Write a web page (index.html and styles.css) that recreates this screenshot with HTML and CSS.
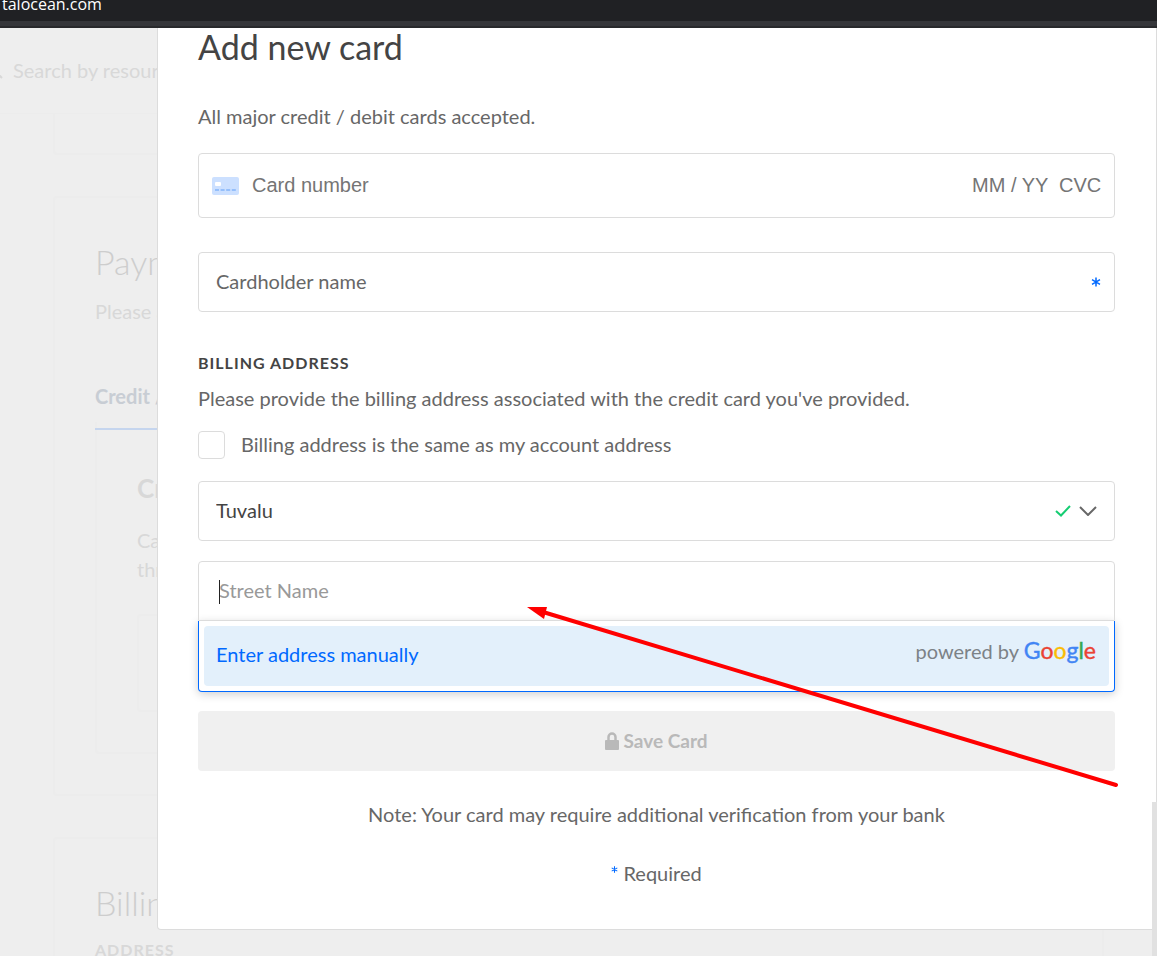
FILE: index.html
```html
<!DOCTYPE html>
<html lang="en">

<head>
    <meta charset="utf-8">
    <meta name="viewport" content="width=device-width, initial-scale=1.0">
    <title>Billing - Add new card</title>
    <link rel="stylesheet" href="styles.css">
</head>

<body>

    <header class="browser">
        <div class="address">talocean.com</div>
    </header>

    <div class="stage">

        <!-- faded billing page behind the modal -->
        <main class="page">
            <div class="search">
                <svg class="search-icon" viewBox="0 0 18 18"><path d="M11 11l6 6" /><circle cx="7" cy="7" r="6" /></svg>
                <span>Search by resource name</span>
            </div>
            <section class="card card-top"></section>
            <section class="card card-payment">
                <h1>Payment methods</h1>
                <p class="lead">Please add a card</p>
                <div class="tab">Credit / Debit Card</div>
                <div class="panel">
                    <h2>Credit Cards</h2>
                    <p>Cards will be charged<br>through the month</p>
                    <div class="add-box"><span>+</span></div>
                </div>
            </section>
            <section class="card card-billing">
                <h1>Billing address</h1>
                <h4>ADDRESS</h4>
            </section>
        </main>

        <form class="modal">
            <h2>Add new card</h2>
            <p class="accepted">All major credit / debit cards accepted.</p>

            <div class="box card-number">
                <svg class="card-icon" viewBox="0 0 27 18">
                    <rect width="27" height="18" rx="2" fill="#cce0ff" />
                    <rect x="3" y="5" width="6" height="4" rx="1" fill="#fff" />
                    <path d="M3 13h21" stroke="#95bffb" stroke-width="2" stroke-dasharray="4 1.6" />
                </svg>
                <input class="number" type="text" placeholder="Card number" aria-label="Card number">
                <input class="expiry" type="text" placeholder="MM / YY" aria-label="Expiry date">
                <input class="cvc" type="text" placeholder="CVC" aria-label="CVC">
            </div>

            <div class="box holder">
                <input type="text" placeholder="Cardholder name" aria-label="Cardholder name">
                <svg class="star" viewBox="0 0 10 10"><path d="M5 0.5v9M1 2.7l8 4.6M9 2.7l-8 4.6" /></svg>
            </div>

            <h3>BILLING ADDRESS</h3>
            <p class="provide">Please provide the billing address associated with the credit card you've provided.</p>

            <div class="same">
                <input type="checkbox" id="same">
                <label for="same">Billing address is the same as my account address</label>
            </div>

            <div class="box country">
                <select aria-label="Country">
                    <option>Tuvalu</option>
                </select>
                <div class="marks">
                    <svg class="check" viewBox="0 0 16 12"><path d="M1 6l5 4.5L15 1" /></svg>
                    <svg class="chevron" viewBox="0 0 18 10"><path d="M1 1l8 8 8-8" /></svg>
                </div>
            </div>

            <div class="box street">
                <input type="text" placeholder="Street Name" aria-label="Street Name">
            </div>
            <div class="suggestions">
                <button type="button" class="manual">
                    <span>Enter address manually</span>
                    <span class="powered">powered by <span class="google"><i class="b">G</i><i class="r">o</i><i class="y">o</i><i class="b">g</i><i class="g">l</i><i class="r">e</i></span></span>
                </button>
            </div>

            <button type="submit" class="save" disabled>
                <svg class="lock" viewBox="0 0 14 18">
                    <path d="M3.5 9V5a3.5 3.5 0 0 1 7 0v4" fill="none" stroke="#b9b9b9" stroke-width="2.5" />
                    <rect y="8" width="14" height="10" rx="1" fill="#b9b9b9" />
                </svg>
                Save Card
            </button>

            <p class="note">Note: Your card may require additional verification from your bank</p>
            <p class="note"><svg class="star small" viewBox="0 0 10 10"><path d="M5 0.5v9M1 2.7l8 4.6M9 2.7l-8 4.6" /></svg> Required</p>

            <!-- red arrow pointing at the street field -->
            <svg class="arrow" viewBox="0 0 592 182">
                <path d="M16 5L589 178" stroke="#f00" stroke-width="4" stroke-linecap="round" />
                <path d="M0 0h20l-3 12z" fill="#f00" />
            </svg>
        </form>

        <div class="scrollbar"></div>
    </div>

</body>

</html>
```
FILE: styles.css
```css
* {
    box-sizing: border-box;
}

body {
    margin: 0;
    height: 100vh;
    display: flex;
    flex-direction: column;
    overflow: hidden;
    background-color: #eee;
    color: #676767;
    font-family: Lato, "Liberation Sans", sans-serif;
    font-size: 20px;
    line-height: 28px;
}

h1,
h2,
h3,
h4,
p {
    margin: 0;
}

input,
select,
button {
    font: inherit;
    color: inherit;
    border: none;
    background: none;
    padding: 0;
    margin: 0;
    outline: none;
}

svg {
    fill: none;
    flex: none;
}

/* browser bar */
.browser {
    flex: none;
    height: 28px;
    background-color: #202124;
    border-bottom: 2px solid #28292c;
}

.address {
    height: 26px;
    border-bottom: 5px solid #35363a;
    padding-left: 2px;
    color: #fff;
    font-family: "Open Sans", sans-serif;
    font-size: 16px;
    line-height: 9px;
}

.stage {
    position: relative;
    flex: 1;
    min-height: 0;
    overflow: hidden;
}

/* page behind */
.page {
    position: absolute;
    inset: 0;
    overflow: hidden;
    color: #d8d8d8;
    white-space: nowrap;
}

.search {
    display: flex;
    align-items: center;
    gap: 10px;
    height: 86px;
    margin-left: -15px;
    padding-bottom: 2px;
    border-bottom: 1px solid #ececec;
}

.search-icon {
    width: 18px;
    height: 18px;
    stroke: #d8d8d8;
    stroke-width: 2;
}

.card {
    margin: 0 53px 41px;
    border: 2px solid #ececec;
    border-radius: 4px;
    padding: 0 40px;
}

.card-top {
    height: 41px;
    border-top: none;
    border-radius: 0 0 4px 4px;
}

.card-payment {
    padding-top: 44px;
    padding-bottom: 40px;
}

.card-billing {
    padding-top: 44px;
    height: 300px;
}

.page h1 {
    font-size: 34px;
    font-weight: 300;
    line-height: 40px;
    color: #cdcdcd;
}

.lead {
    margin-top: 15px;
}

.tab {
    display: inline-block;
    margin-top: 57px;
    height: 48px;
    border-bottom: 2px solid #c5d5ee;
    color: #c8cdd4;
    font-weight: 700;
}

.panel {
    border: 2px solid #ececec;
    border-top: none;
    border-radius: 0 0 4px 4px;
    margin-top: -8px;
    padding: 50px 38px 40px 40px;
}

.panel h2 {
    font-size: 26px;
    line-height: 32px;
}

.panel p {
    margin-top: 22px;
    line-height: 29px;
}

.add-box {
    height: 98px;
    margin-top: 30px;
    border: 2px solid #ececec;
    border-radius: 4px;
    padding: 24px 18px;
}

.page h4 {
    margin-top: 13px;
    font-size: 16px;
    letter-spacing: 1px;
}

/* modal */
.modal {
    position: relative;
    display: flex;
    flex-direction: column;
    margin-left: 157px;
    padding: 0 41px 42px 40px;
    background-color: #fff;
    border: 1px solid #dcdcdc;
    border-top: none;
    border-radius: 0 0 4px 4px;
}

.modal h2 {
    color: #444;
    font-size: 34px;
    font-weight: 400;
    line-height: 38px;
}

.accepted {
    margin: 36px 0 23px;
}

.box {
    position: relative;
    display: flex;
    align-items: center;
    height: 60px;
    padding: 0 17px;
    border: 1px solid #dcdcdc;
    border-radius: 4px;
}

.box input,
.box select {
    flex: 1;
    min-width: 0;
    height: 100%;
    padding-bottom: 3px;
}

.box input::placeholder {
    color: #676767;
    opacity: 1;
}

.card-number {
    height: 65px;
    padding: 0 13px;
    font-family: "Liberation Sans", sans-serif;
}

.card-number input {
    padding-bottom: 0;
}

.card-icon {
    width: 27px;
    height: 18px;
    margin-right: 13px;
}

.card-number .expiry {
    flex: none;
    width: 87px;
}

.card-number .cvc {
    flex: none;
    width: 42px;
}

.card-number input::placeholder {
    color: #757575;
}

.holder {
    margin-top: 34px;
    padding-right: 13px;
}

.star {
    width: 10px;
    height: 10px;
    stroke: #0069ff;
    stroke-width: 1.5;
}

.star.small {
    width: 7px;
    height: 7px;
    vertical-align: 8px;
}

.modal h3 {
    margin-top: 40px;
    color: #444;
    font-size: 16px;
    line-height: 22px;
    letter-spacing: 1px;
}

.provide {
    margin-top: 10px;
}

.same {
    display: flex;
    align-items: center;
    gap: 16px;
    height: 28px;
    margin: 19px 0 22px;
}

.same input {
    appearance: none;
    width: 27px;
    height: 28px;
    border: 1px solid #dcdcdc;
    border-radius: 4px;
}

.same label {
    padding-bottom: 2px;
}

.country {
    color: #444;
}

.country select {
    appearance: none;
}

.marks {
    display: flex;
    align-items: center;
    gap: 8px;
    pointer-events: none;
}

.check {
    width: 16px;
    height: 12px;
    stroke: #15cd72;
    stroke-width: 2;
}

.chevron {
    width: 18px;
    height: 10px;
    stroke: #676767;
    stroke-width: 2;
}

.street {
    margin-top: 20px;
    padding-left: 20px;
    border-radius: 4px 4px 0 0;
}

.street::before {
    content: "";
    position: absolute;
    left: 20px;
    top: 18px;
    width: 1px;
    height: 24px;
    background-color: #222;
}

.street input::placeholder {
    color: #999;
}

.suggestions {
    padding: 5px;
    border: 1px solid #0069ff;
    border-top: none;
    border-radius: 0 0 4px 4px;
    box-shadow: 0 2px 10px rgba(0, 0, 0, 0.2);
}

.manual {
    display: flex;
    justify-content: space-between;
    align-items: center;
    width: 100%;
    height: 60px;
    padding: 0 13px 5px 12px;
    border-radius: 4px;
    background-color: #e3f0fb;
    color: #0069ff;
}

.powered {
    padding-bottom: 6px;
    color: #7c8287;
}

.google {
    font-size: 23px;
    -webkit-text-stroke: 0.4px;
}

.google i {
    font-style: normal;
}

.b {
    color: #4285f4;
}

.r {
    color: #ea4335;
}

.y {
    color: #fbbc05;
}

.g {
    color: #34a853;
}

.save {
    display: flex;
    justify-content: center;
    align-items: center;
    gap: 4px;
    height: 60px;
    margin-top: 19px;
    border-radius: 4px;
    background-color: #f0f0f0;
    color: #b9b9b9;
    font-size: 19px;
    font-weight: 700;
}

.lock {
    width: 14px;
    height: 18px;
}

.note {
    margin-top: 29px;
    text-align: center;
}

.note + .note {
    margin-top: 31px;
}

.arrow {
    position: absolute;
    right: 37px;
    top: 579px;
    width: 592px;
    height: 182px;
    pointer-events: none;
}

.scrollbar {
    position: absolute;
    right: 0;
    bottom: 0;
    width: 5px;
    height: 154px;
    background-color: #e1e1e1;
}
```
